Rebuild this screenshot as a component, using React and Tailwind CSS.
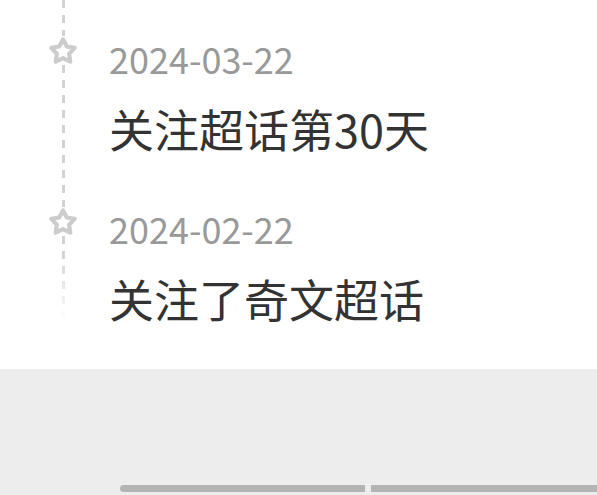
const font = { fontFamily: '"Noto Sans CJK SC", "Noto Sans", sans-serif' };

const items = [
  { date: '2024-03-22', text: '关注超话第30天' },
  { date: '2024-02-22', text: '关注了奇文超话' },
];

function StarIcon() {
  return (
    <svg width="30" height="29" viewBox="0 0 30 29" fill="none" className="flex-shrink-0">
      <path
        d="M15 3.4 L18.8 10.5 L26.7 11.9 L21.1 17.7 L22.3 25.7 L15 22.2 L7.7 25.7 L8.9 17.7 L3.3 11.9 L11.2 10.5 Z"
        stroke="#cccccc"
        strokeWidth="4.2"
        strokeLinejoin="round"
      />
    </svg>
  );
}

function Dashes({ className }) {
  return (
    <div
      className={`w-[3px] bg-[repeating-linear-gradient(to_bottom,#d2d2d2_0px,#d2d2d2_8px,transparent_8px,transparent_15px)] ${className}`}
    />
  );
}

function TimelineItem({ item, last }) {
  return (
    <div className="flex h-[170px]">
      {/* rail */}
      <div className="ml-[48px] w-[30px] flex flex-col items-center">
        <Dashes className={last ? 'h-[37px]' : 'h-[36px]'} />
        <StarIcon />
        {last ? (
          <Dashes className="h-[86px] [mask-image:linear-gradient(to_bottom,black_20%,transparent)]" />
        ) : (
          <Dashes className="flex-1" />
        )}
      </div>

      {/* content */}
      <div className="ml-[31px] flex flex-col pt-[40px]" style={font}>
        <p className="text-[36px] leading-none text-[#999999]">{item.date}</p>
        <p className="mt-[30px] text-[45px] leading-none text-[#333333]">{item.text}</p>
      </div>
    </div>
  );
}

export default function App() {
  return (
    <div className="w-[597px] h-[495px] flex flex-col overflow-hidden bg-white">
      <div className="h-[369px] bg-white">
        {items.map((item, i) => (
          <TimelineItem key={item.date} item={item} last={i === items.length - 1} />
        ))}
      </div>

      <div className="flex-1 bg-[#ededed] flex flex-col justify-end pb-[3px]">
        <div className="flex gap-[6px] ml-[120px] h-[7px]">
          <div className="w-[245px] bg-[#b4b4b4] rounded-l-full" />
          <div className="flex-1 bg-[#b4b4b4]" />
        </div>
      </div>
    </div>
  );
}
